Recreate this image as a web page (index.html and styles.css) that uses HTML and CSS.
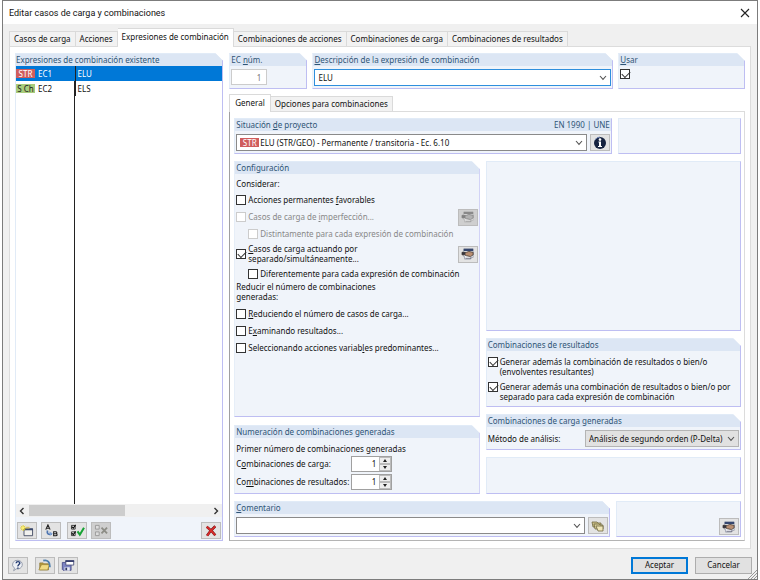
FILE: index.html
```html
<!DOCTYPE html>
<html lang="es">
<head>
<meta charset="utf-8">
<title>Editar casos de carga y combinaciones</title>
<link rel="stylesheet" href="styles.css">
</head>
<body>
<svg class="defs" aria-hidden="true">
  <symbol id="edit" viewBox="0 0 16 14">
    <path d="M3 1h11v10h-3v2H4v-3H3z" fill="#f4f6fa" stroke="#8a90a0" stroke-width=".8"/>
    <path d="M3 1h11v2.5H3z" fill="#35466e"/>
    <path d="M1 5h5l3-1 5 1v3l-3 2-5-1-2-1H1z" fill="#b98f72" stroke="#3d332e" stroke-width=".9"/>
    <path d="M1 5h4v3H1z" fill="#34343c"/>
    <path d="M5 12h7" stroke="#667" stroke-width="1"/>
  </symbol>
  <symbol id="chevron" viewBox="0 0 8 6"><path d="M1 1l3 3.4L7 1" fill="none" stroke="#555" stroke-width="1.1"/></symbol>
</svg>
<div class="window">
  <header class="titlebar">
    <h1>Editar casos de carga y combinaciones</h1>
    <button class="close" aria-label="Cerrar"><svg width="10" height="10" viewBox="0 0 10 10"><path d="M1 1l8 8M9 1L1 9" stroke="#222" stroke-width="1.1"/></svg></button>
  </header>

  <nav class="tabs">
    <button class="tab">Casos de carga</button>
    <button class="tab">Acciones</button>
    <button class="tab active">Expresiones de combinación</button>
    <button class="tab">Combinaciones de acciones</button>
    <button class="tab">Combinaciones de carga</button>
    <button class="tab">Combinaciones de resultados</button>
  </nav>

  <main class="page">
    <section class="panel cut list-panel">
      <h2>Expresiones de combinación existente</h2>
      <div class="list">
        <table>
          <tbody>
            <tr class="selected"><td><span class="badge str">STR</span>EC1</td><td>ELU</td></tr>
            <tr><td><span class="badge sch">S Ch</span>EC2</td><td>ELS</td></tr>
          </tbody>
        </table>
      </div>
      <div class="scrollbar">
        <svg width="6" height="8" viewBox="0 0 6 8"><path d="M4.500 1L1.500 4l3 3" fill="none" stroke="#333" stroke-width="1.400"/></svg>
        <div class="track"><div class="thumb"></div></div>
        <svg width="6" height="8" viewBox="0 0 6 8"><path d="M1.500 1l3 3-3 3" fill="none" stroke="#333" stroke-width="1.400"/></svg>
      </div>
      <div class="toolbar">
        <button class="icon-btn" aria-label="Nuevo"><svg width="14" height="12" viewBox="0 0 16 14"><path d="M4.500 4.500h10v8h-10z" fill="#f1f1ee" stroke="#39435c"/><path d="M4 4h11v2H4z" fill="#39496f"/><path d="M7 3h4" stroke="#cdb96b" stroke-width="2"/><path d="M3.500 0v7M0 3.500h7M1 1l5 5M6 1L1 6" stroke="#e5cf20" stroke-width="1.100"/><circle cx="3.500" cy="3.500" r="1.500" fill="#fff36a"/></svg></button>
        <button class="icon-btn" aria-label="Renombrar"><svg width="14" height="13" viewBox="0 0 16 14"><path d="M2 6l2.500-5.500L7 6M3 4.500h3" fill="none" stroke="#222" stroke-width="1.200"/><path d="M4 7c-1 4 1 5 5 4" fill="none" stroke="#4d74b0" stroke-width="2"/><path d="M6 8l4 2.500L7 13z" fill="#7fa3d6"/><path d="M11 8.500v4.500h2.500c2 0 2-2 .3-2.200 1.400-.3 1.200-2.300-.5-2.300zM11 10.800h3" fill="none" stroke="#222" stroke-width="1.200"/></svg></button>
        <button class="icon-btn gap" aria-label="Seleccionar"><svg width="15" height="13" viewBox="0 0 16 14"><path d="M1.500 1.500h4v4h-4zM1.500 8.500h4v4h-4z" fill="#fff" stroke="#333"/><path d="M2 3l1.500 1.500L6 1M2 10l1.500 1.500L6 8" fill="none" stroke="#111" stroke-width="1.300"/><path d="M8 8l2.500 3.500L15 4" fill="none" stroke="#16a336" stroke-width="2.200"/></svg></button>
        <button class="icon-btn off" aria-label="Deseleccionar" disabled><svg width="15" height="13" viewBox="0 0 16 14"><path d="M1.500 1.500h4v4h-4zM1.500 8.500h4v4h-4z" fill="#ddd" stroke="#999"/><path d="M8 4l6 6M14 4l-6 6" stroke="#8d8d86" stroke-width="2"/></svg></button>
        <button class="icon-btn end" aria-label="Eliminar"><svg width="12" height="12" viewBox="0 0 14 14"><path d="M2 2c4 3 7 6 10 10M12 1.500C8 5 5 8 2.500 12.500" fill="none" stroke="#6b1515" stroke-width="3"/><path d="M2 2c4 3 7 6 10 10M12 1.500C8 5 5 8 2.500 12.500" fill="none" stroke="#d92b2b" stroke-width="2"/></svg></button>
      </div>
    </section>

    <div class="detail">
      <div class="head-row">
        <section class="panel cut num">
          <h2><label for="ec">EC <u>n</u>úm.</label></h2>
          <div class="body"><input id="ec" class="ec" value="1" disabled></div>
        </section>
        <section class="panel cut desc">
          <h2><label for="desc"><u>D</u>escripción de la expresión de combinación</label></h2>
          <div class="body">
            <div class="combo focus"><select id="desc"><option>ELU</option></select><svg class="chev"><use href="#chevron"/></svg></div>
          </div>
        </section>
        <section class="panel cut use">
          <h2><label for="usar"><u>U</u>sar</label></h2>
          <div class="body"><input type="checkbox" id="usar" checked></div>
        </section>
      </div>

      <nav class="tabs sub">
        <button class="tab active">General</button>
        <button class="tab">Opciones para combinaciones</button>
      </nav>

      <div class="sheet">
        <div class="row">
          <section class="panel wide">
            <h2><label for="sit">Situación <u>d</u>e proyecto</label><span>EN 1990 | UNE</span></h2>
            <div class="body">
              <div class="combo"><span class="badge str">STR</span><select id="sit"><option>ELU (STR/GEO) - Permanente / transitoria - Ec. 6.10</option></select><svg class="chev"><use href="#chevron"/></svg></div>
              <button class="icon-btn" aria-label="Información"><svg width="14" height="14" viewBox="0 0 14 14"><circle cx="7" cy="7" r="6" fill="#15223f"/><path d="M2 4a6 6 0 0 1 5-3" stroke="#7083b3" fill="none"/><circle cx="7" cy="3.600" r="1.300" fill="#fff"/><path d="M5.500 5.500H8V10h1v1H5v-1h1V6.500h-.5z" fill="#fff"/></svg></button>
            </div>
          </section>
          <div class="panel side"></div>
        </div>

        <div class="columns">
          <div class="col">
            <section class="panel cut grow">
              <h2>Configuración</h2>
              <div class="config">
                <p class="line">Considerar:</p>
                <div class="check"><input type="checkbox" id="c1"><label for="c1">Acciones permanentes <u>f</u>avorables</label></div>
                <div class="check tall"><input type="checkbox" id="c2" disabled><label for="c2">Casos de carga de <u>i</u>mperfección...</label><button class="icon-btn off" aria-label="Editar imperfección" disabled><svg width="14" height="12" class="faded"><use href="#edit"/></svg></button></div>
                <div class="check inner"><input type="checkbox" id="c3" disabled><label for="c3">Distintamente para cada expresión de combinación</label></div>
                <div class="check double"><input type="checkbox" id="c4" checked><label for="c4"><u>C</u>asos de carga actuando por<br>separado/simultáneamente...</label><button class="icon-btn" aria-label="Editar casos"><svg width="14" height="12"><use href="#edit"/></svg></button></div>
                <div class="check inner"><input type="checkbox" id="c5"><label for="c5">Diferentemente para cada expresión de combinación</label></div>
                <p class="reduce">Reducir el número de combinaciones<br>generadas:</p>
                <div class="check option"><input type="checkbox" id="c6"><label for="c6"><u>R</u>educiendo el número de casos de carga...</label></div>
                <div class="check option"><input type="checkbox" id="c7"><label for="c7">E<u>x</u>aminando resultados...</label></div>
                <div class="check option"><input type="checkbox" id="c8"><label for="c8">Seleccionando acciones variab<u>l</u>es predominantes...</label></div>
              </div>
            </section>
            <section class="panel cut">
              <h2>Numeración de combinaciones generadas</h2>
              <div class="numbering">
                <p>Primer número de combinaciones generadas</p>
                <label for="n1">C<u>o</u>mbinaciones de carga:</label>
                <div class="spin"><input id="n1" value="1"><button aria-label="Subir"></button><button class="down" aria-label="Bajar"></button></div>
                <label for="n2">Co<u>m</u>binaciones de resultados:</label>
                <div class="spin"><input id="n2" value="1"><button aria-label="Subir"></button><button class="down" aria-label="Bajar"></button></div>
              </div>
            </section>
          </div>
          <div class="col right">
            <div class="panel grow"></div>
            <section class="panel cut">
              <h2>Combinaciones de resultados</h2>
              <div class="results">
                <div class="check"><input type="checkbox" id="r1" checked><label for="r1">Generar además la combinación de resultados o bien/o<br>(envolventes resultantes)</label></div>
                <div class="check"><input type="checkbox" id="r2" checked><label for="r2">Generar además una combinación de resultados o bien/o por<br>separado para cada expresión de combinación</label></div>
              </div>
            </section>
            <section class="panel cut">
              <h2>Combinaciones de carga generadas</h2>
              <div class="body method">
                <label for="met">Método de análisis:</label>
                <div class="combo gray"><select id="met"><option>Análisis de segundo orden (P-Delta)</option></select><svg class="chev"><use href="#chevron"/></svg></div>
              </div>
            </section>
            <div class="panel blank"></div>
          </div>
        </div>

        <div class="row">
          <section class="panel cut wide">
            <h2><label for="com"><u>C</u>omentario</label></h2>
            <div class="body">
              <div class="combo"><select id="com"><option></option></select><svg class="chev"><use href="#chevron"/></svg></div>
              <button class="icon-btn" aria-label="Biblioteca"><svg width="14" height="12" viewBox="0 0 14 12"><path d="M1 2h5l1 1h3v4H2z" fill="#c9bd85" stroke="#6f683f" stroke-width=".8"/><path d="M3 4h5l1 1h3v4H4z" fill="#d8cd98" stroke="#6f683f" stroke-width=".8"/><path d="M5 6h7v5H7z" fill="#efe6b8" stroke="#6f683f" stroke-width=".8"/></svg></button>
            </div>
          </section>
          <div class="panel side corner"><button class="icon-btn" aria-label="Editar"><svg width="14" height="12"><use href="#edit"/></svg></button></div>
        </div>
      </div>
    </div>
  </main>

  <footer class="footer">
    <button class="icon-btn" aria-label="Ayuda"><svg width="14" height="13" viewBox="0 0 16 14"><path d="M8 1a5.500 5 0 1 1-2 9.800L3 13l1-3A5.500 5 0 0 1 8 1z" fill="#eef1f6" stroke="#8c93a3"/><path d="M5.800 4.500C6 2 10.200 2 10 4.500 9.800 6 7.800 6 7.900 8M7.900 9.200v1.600" fill="none" stroke="#243c72" stroke-width="1.600"/></svg></button>
    <button class="icon-btn gap" aria-label="Abrir"><svg width="14" height="13" viewBox="0 0 16 14"><path d="M2 4h4l1 1h5v7H2z" fill="#b99b3c" stroke="#8b7634" stroke-width=".8"/><path d="M1 12l3-6h9l-2 6z" fill="#f1dc84" stroke="#9a843a" stroke-width=".8"/><path d="M6 1.500c5-1.500 8 2 7.500 7.500" fill="none" stroke="#4d7fae" stroke-width="2"/></svg></button>
    <button class="icon-btn" aria-label="Guardar"><svg width="14" height="13" viewBox="0 0 16 14"><path d="M1.500 3.500h10v9h-9l-1-1z" fill="#7d84c4" stroke="#4a4f8a"/><path d="M4 9h6v4H4z" fill="#e8ebf4"/><path d="M5 9.500h2v3H5z" fill="#333a66"/><path d="M5.500 1.500h9v5h-9z" fill="#fff" stroke="#4a4f7c"/><path d="M5 1h10v2H5z" fill="#39406f"/></svg></button>
    <button class="push primary">Aceptar</button>
    <button class="push">Cancelar</button>
    <svg class="grip" width="9" height="9" viewBox="0 0 9 9"><path d="M0 9l9-9M3 9l6-6M6 9l3-3" stroke="#999"/></svg>
  </footer>
</div>
</body>
</html>
```

FILE: styles.css
```css
:root {
  --ui: "Noto Sans", "Open Sans", sans-serif;
  --title: Roboto, "Noto Sans", sans-serif;
}
* { box-sizing: border-box; }
body {
  margin: 0;
  background: #fff;
  font: 8px/10px var(--ui);
  color: #111;
}
button, input, select { font: inherit; color: inherit; margin: 0; padding: 0; }
h1, h2, p { margin: 0; font-weight: normal; }
svg { display: block; flex: none; }
label, .tab { white-space: nowrap; }
u { text-decoration-thickness: 1px; }
.defs { display: none; }

.window {
  display: flex;
  flex-direction: column;
  min-height: 100vh;
  margin: 0 2px;
  border: 1px solid #7c7c7c;
  background: #f0f0f0;
}
.titlebar {
  display: flex;
  align-items: center;
  justify-content: space-between;
  height: 23px;
  padding: 0 7px 0 6px;
  background: #fff;
}
.titlebar h1 { font: 9px/12px var(--title); }
.close { border: 0; background: none; }

.tabs { display: flex; align-items: flex-end; margin: 4px 6px 0; height: 18px; }
.tab {
  height: 15px;
  padding: 0 4px;
  border: 1px solid #dadada;
  border-width: 1px 1px 0 0;
  background: #f2f2f2;
}
.tab:first-child { border-left-width: 1px; }
.tab.active {
  height: 19px;
  margin-bottom: -1px;
  padding-bottom: 3px;
  background: #fff;
  position: relative;
}

.page {
  display: grid;
  grid-template-columns: 208fr 515fr;
  gap: 6px;
  flex: 1;
  margin: 0 6px;
  padding: 6px 5px 7px;
  border: 1px solid #dcdcdc;
  background: #fff;
}

.panel {
  border: 1px solid #e1ebf7;
  border-right-color: #bebef2;
  border-bottom-color: #bebef2;
  background: #f0f4fa;
}
.panel.cut { clip-path: polygon(0 0, calc(100% - 8px) 0, 100% 8px, 100% 100%, 0 100%); }
.panel h2 {
  display: flex;
  justify-content: space-between;
  height: 12px;
  padding: 0 1px;
  background: #dce6f4;
  color: #2f5576;
  font-size: 8px;
  line-height: 11px;
}
.body { display: flex; align-items: center; gap: 3px; padding: 3px 1px 2px; }

.list-panel { display: flex; flex-direction: column; }
.list-panel h2 { padding-left: 0; }
.list {
  flex: 1;
  background: linear-gradient(#222, #222) 58px 0 / 1px 100% no-repeat #fff;
}
table { width: 100%; border-collapse: collapse; }
td { height: 15px; padding: 0 2px; }
td:first-child { width: 59px; padding: 0; border-right: 1px solid #222; }
.selected { background: #0078d7; color: #fff; }
.badge {
  display: inline-block;
  width: 19px;
  margin-right: 3px;
  line-height: 9px;
  text-align: center;
  white-space: nowrap;
}
.badge.str { background: #d05d5d; color: #fff; }
.badge.sch { background: #a9cc7c; color: #222; }
.scrollbar {
  display: flex;
  align-items: center;
  gap: 4px;
  height: 13px;
  padding: 0 3px;
  background: #f0f0f0;
}
.track { flex: 1; }
.thumb { width: 53%; height: 11px; background: #cdcdcd; }
.toolbar { display: flex; gap: 4px; padding: 5px 1px 1px; }

.icon-btn {
  display: flex;
  align-items: center;
  justify-content: center;
  flex: none;
  width: 20px;
  height: 17px;
  border: 1px solid #bcbcbc;
  background: #e3e3e3;
}
.icon-btn.off { background: #cfcfcf; }
.toolbar .gap { margin-left: 2px; }
.toolbar .end { margin-left: auto; }
.faded { filter: grayscale(1); opacity: .5; }

.detail { display: flex; flex-direction: column; min-width: 0; }
.head-row { display: flex; gap: 5px; }
.num { flex: 77; }
.desc { flex: 302; }
.use { flex: 126; }
.head-row .panel { height: 36px; }
.ec {
  width: 36px;
  height: 16px;
  padding-right: 5px;
  border: 1px solid #ccc;
  background: #fff;
  color: #777;
  text-align: right;
}

.combo {
  display: flex;
  align-items: center;
  flex: 1;
  height: 17px;
  padding: 0 3px;
  border: 1px solid #8a8a8a;
  background: #fff;
}
.combo select {
  flex: 1;
  min-width: 0;
  height: 15px;
  border: 0;
  background: none;
  appearance: none;
  outline: 0;
}
.combo .badge { margin: 0 1px 0 0; }
.combo.focus { border-color: #2e8fdd; }
.combo.gray { flex: none; width: 154px; border-color: #b4b4b4; background: #e1e1e1; }
.chev { width: 8px; height: 6px; }

.tabs.sub { margin: 5px 0 0; height: 17px; }
.tabs.sub .active { height: 18px; padding: 0 5px 2px; }
.sheet {
  display: flex;
  flex-direction: column;
  gap: 7px;
  flex: 1;
  padding: 6px 3px 3px 4px;
  border: 1px solid #dcdcdc;
  border-left-color: #a0a0a0;
  border-bottom-color: #b4b4b4;
}
.row { display: flex; gap: 6px; }
.row .panel { height: 36px; }
.wide { flex: 378; }
.side { flex: 122; }
.corner { display: flex; align-items: flex-end; justify-content: flex-end; padding: 1px; }
.columns { display: flex; gap: 6px; flex: 1; }
.col { display: flex; flex-direction: column; gap: 8px; flex: 245; min-width: 0; }
.col.right { gap: 7px; flex: 255; }
.grow { flex: 1; }
.blank { height: 37px; }

input[type="checkbox"] {
  appearance: none;
  display: grid;
  flex: none;
  width: 10px;
  height: 10px;
  border: 1px solid #333;
  background: #fff;
}
input[type="checkbox"]:disabled { border-color: #ccc; }
input[type="checkbox"]:checked::before {
  content: "";
  width: 7px;
  height: 4px;
  margin: 1px 0 0 1px;
  border: solid #333;
  border-width: 0 0 1px 1px;
  transform: rotate(-45deg);
}
.check { display: flex; align-items: center; gap: 2px; height: 16px; }
.check .icon-btn { margin-left: auto; }
.check input:disabled + label { color: #888; }
.config { padding: 2px 1px; }
.line { height: 16px; line-height: 16px; }
.check.tall { height: 18px; }
.check.inner { padding-left: 12px; }
.check.double { height: 24px; }
.reduce { margin-bottom: 3px; }
.check.option { height: 17px; }

.numbering {
  display: grid;
  grid-template-columns: 115px auto;
  justify-content: start;
  align-items: center;
  row-gap: 2px;
  padding: 6px 1px 3px;
}
.numbering p { grid-column: 1 / 3; }
.spin {
  display: grid;
  justify-self: start;
  grid-template: 7px 7px / 27px 12px;
  border: 1px solid #a0a0a0;
  background: #fff;
}
.spin input { grid-row: 1 / 3; min-width: 0; width: 27px; padding-right: 3px; border: 0; background: none; text-align: right; }
.spin button { display: grid; place-content: center; border: 1px solid #bbb; background: #eee; }
.spin button::before {
  content: "";
  border: solid transparent;
  border-width: 0 2px 3px;
  border-bottom-color: #222;
}
.spin .down::before { transform: rotate(180deg); }

.results { padding: 6px 1px 4px; }
.results .check { height: 20px; align-items: flex-start; }
.results .check + .check { margin-top: 5px; }
.method { justify-content: space-between; }

.footer { display: flex; align-items: center; gap: 3px; height: 30px; padding: 2px 5px 0; position: relative; }
.footer .gap { margin-left: 4px; }
.push { width: 57px; height: 17px; border: 1px solid #adadad; background: #e1e1e1; }
.push.primary { margin: 0 4px 0 auto; border: 2px solid #0078d7; }
.grip { position: absolute; right: 0; bottom: 0; }
```
